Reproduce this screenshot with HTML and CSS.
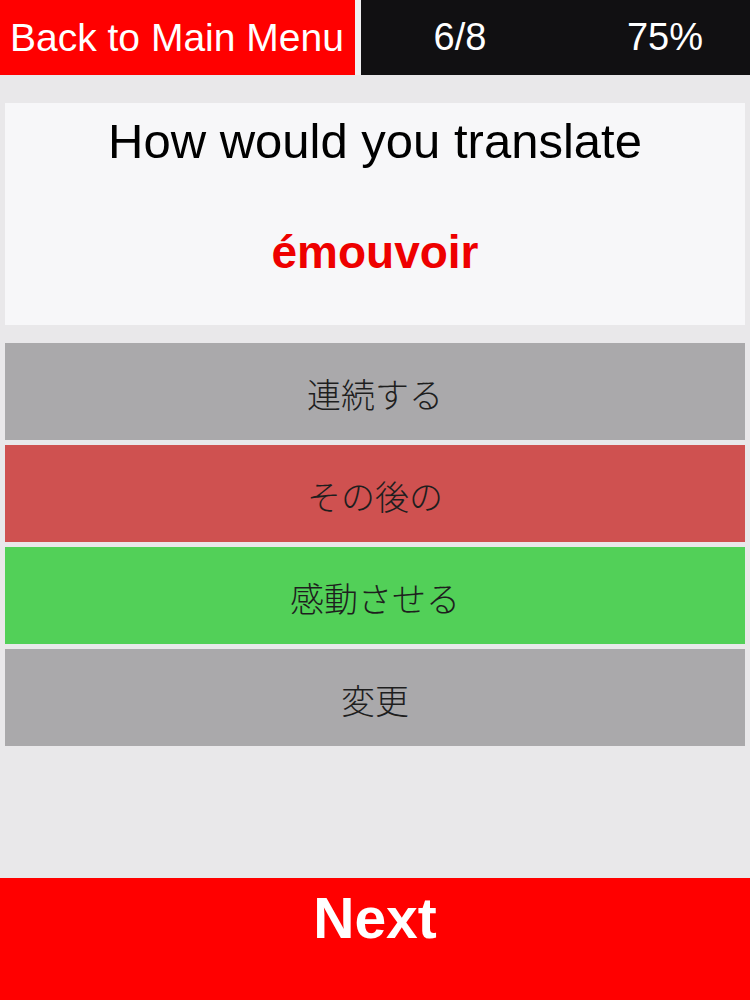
FILE: index.html
```html
<!DOCTYPE html>
<html lang="ja">
<head>
<meta charset="utf-8">
<title>Quiz</title>
<link rel="stylesheet" href="styles.css">
</head>
<body>
<div class="app">
  <header class="topbar">
    <div class="back">Back to Main Menu</div>
    <div class="stats">
      <span class="stat">6/8</span>
      <span class="stat">75%</span>
    </div>
  </header>
  <main class="content">
    <section class="question">
      <div class="prompt">How would you translate</div>
      <div class="word">émouvoir</div>
    </section>
    <div class="answers">
      <div class="answer neutral">連続する</div>
      <div class="answer wrong">その後の</div>
      <div class="answer right">感動させる</div>
      <div class="answer neutral">変更</div>
    </div>
  </main>
  <footer class="next">Next</footer>
</div>
</body>
</html>
```

FILE: styles.css
```css
html, body {
  margin: 0;
  padding: 0;
}
body {
  background: #e9e8ea;
  font-family: "Liberation Sans", Arial, sans-serif;
}
.app {
  display: flex;
  flex-direction: column;
  height: 1000px;
}
.topbar {
  display: flex;
  height: 75px;
  gap: 6px;
  background: #f1f0f2;
  color: #ffffff;
  font-size: 38px;
}
.back {
  width: 355px;
  background: #ff0000;
  display: flex;
  align-items: center;
  padding-left: 10px;
  box-sizing: border-box;
  white-space: nowrap;
  font-size: 39px;
}
.stats {
  flex: 1;
  background: #111012;
  display: flex;
  align-items: center;
  padding-left: 39px;
  gap: 85px;
}
.stat {
  width: 120px;
  text-align: center;
}
.content {
  padding: 28px 5px 0;
  display: flex;
  flex-direction: column;
  gap: 18px;
}
.question {
  height: 222px;
  background: #f7f7f9;
  text-align: center;
  box-sizing: border-box;
  padding-top: 15px;
}
.prompt {
  font-size: 49px;
  line-height: 46px;
  color: #000000;
  white-space: nowrap;
}
.word {
  font-size: 46px;
  line-height: 46px;
  font-weight: bold;
  color: #ee0000;
  margin-top: 65px;
}
.answers {
  display: flex;
  flex-direction: column;
  gap: 5px;
}
.answer {
  height: 97px;
  display: flex;
  align-items: center;
  justify-content: center;
  padding-top: 4px;
  box-sizing: border-box;
  font-family: "Noto Sans CJK JP", sans-serif;
  font-weight: 300;
  font-size: 34px;
  color: #1e1e1e;
}
.neutral { background: #aaa9ab; }
.wrong { background: #cf5150; }
.right { background: #52d058; }
.next {
  margin-top: auto;
  height: 122px;
  box-sizing: border-box;
  padding-top: 12px;
  background: #ff0000;
  color: #ffffff;
  text-align: center;
  font-size: 57px;
  line-height: 57px;
  font-weight: bold;
}
```
